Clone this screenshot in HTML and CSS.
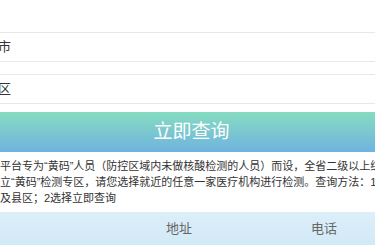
FILE: index.html
```html
<!DOCTYPE html>
<html lang="zh-CN">

<head>
  <meta charset="UTF-8">
  <title>黄码检测专区查询</title>
  <link rel="stylesheet" href="styles.css">
</head>

<body>
  <div class="page">
    <div class="search">
      <div class="field">地市</div>
      <div class="field">县区</div>
      <a class="search-btn" href="javascript:;">立即查询</a>
    </div>

    <p class="desc">本平台专为“黄码”人员（防控区域内未做核酸检测的人员）而设，全省二级以上综合医院均<br>设立“黄码”检测专区，请您选择就近的任意一家医疗机构进行检测。查询方法：1选择地<br>市及县区；2选择立即查询</p>

    <div class="list">
      <div class="list-head">
        <span>地址</span>
        <span>电话</span>
      </div>
    </div>
  </div>
</body>

</html>
```

FILE: styles.css
```css
* {
  padding: 0;
  margin: 0;
  box-sizing: border-box;
}

html,
body {
  overflow: hidden;
}

body {
  font-family: "Liberation Sans", "Noto Sans CJK SC", sans-serif;
  color: #333;
  background: #fff;
}

.page {
  width: 440px;
  margin-left: -24px;
  padding-top: 32px;
}

.search {
  padding: 0 22px 0 13px;
}

.field {
  height: 30px;
  line-height: 28px;
  padding-left: 8px;
  margin-left: -13px;
  font-size: 13px;
  border: 1px solid #e8e8e8;
  border-radius: 2px;
  background: #fff;
}

.field + .field {
  margin-top: 12px;
}

.search-btn {
  display: block;
  height: 40px;
  line-height: 40px;
  margin-top: 8px;
  text-align: center;
  text-decoration: none;
  font-size: 19px;
  color: #fff;
  background: linear-gradient(to bottom, #86dcc0, #6fb3e0);
}

.desc {
  width: 480px;
  padding-left: 13px;
  margin-top: 6px;
  font-size: 11px;
  line-height: 16px;
  white-space: nowrap;
}

/* 列表表头，名称列在可视区外 */
.list {
  margin-top: 6px;
}

.list-head {
  display: grid;
  grid-template-columns: 138px 152px;
  padding-left: 134px;
  height: 33px;
  line-height: 33px;
  font-size: 13px;
  color: #666;
  text-align: center;
  background: linear-gradient(to bottom, #dceff9, #d2e9f6);
}
```
